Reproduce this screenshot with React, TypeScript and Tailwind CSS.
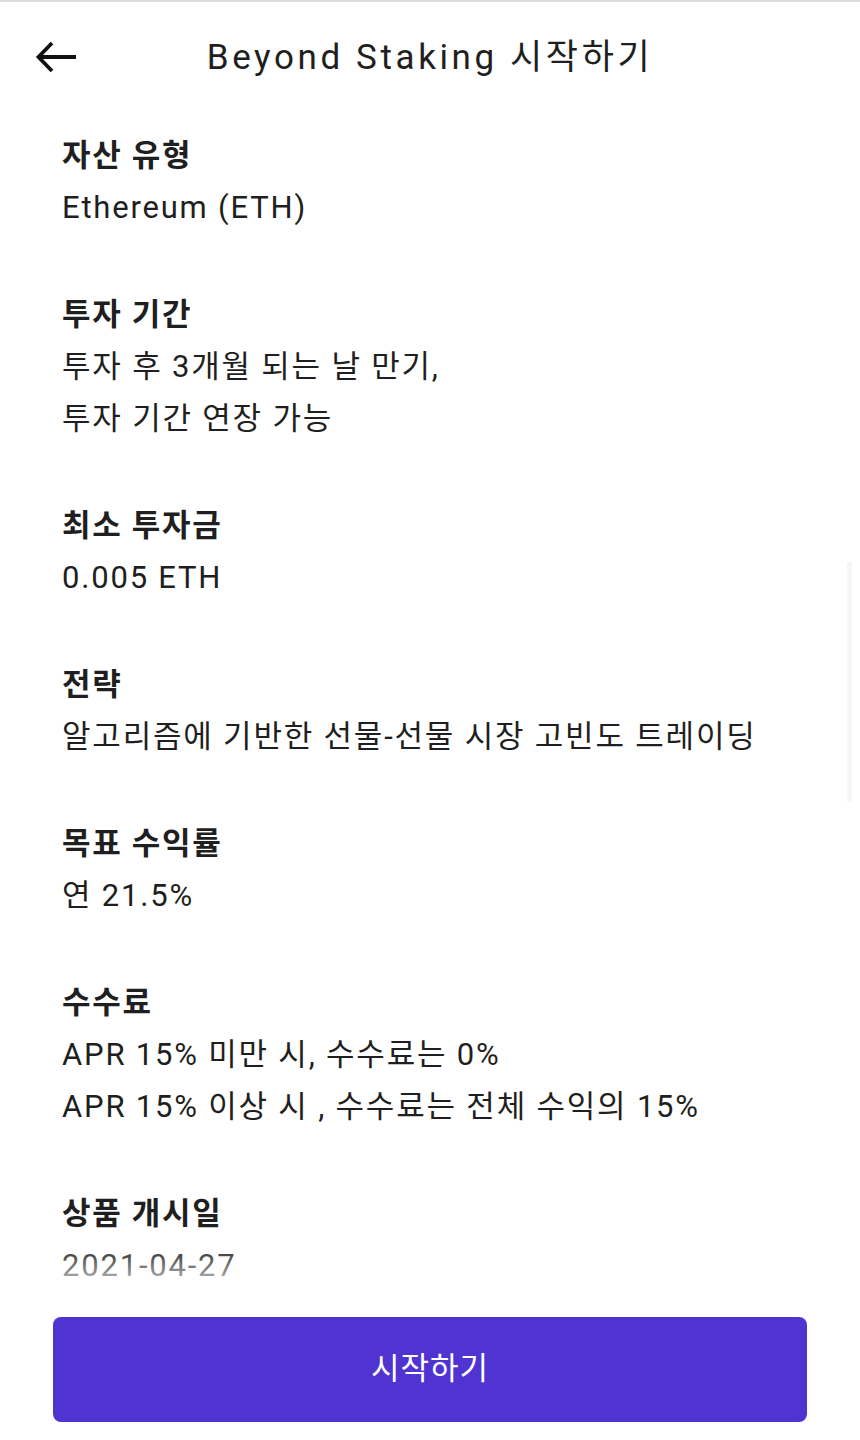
const rows: { label: string; lines: string[] }[] = [
  { label: "자산 유형", lines: ["Ethereum (ETH)"] },
  { label: "투자 기간", lines: ["투자 후 3개월 되는 날 만기,", "투자 기간 연장 가능"] },
  { label: "최소 투자금", lines: ["0.005 ETH"] },
  { label: "전략", lines: ["알고리즘에 기반한 선물-선물 시장 고빈도 트레이딩"] },
  { label: "목표 수익률", lines: ["연 21.5%"] },
  { label: "수수료", lines: ["APR 15% 미만 시, 수수료는 0%", "APR 15% 이상 시 , 수수료는 전체 수익의 15%"] },
  { label: "상품 개시일", lines: ["2021-04-27"] },
]

function BackArrow() {
  return (
    <svg width="44" height="34" viewBox="0 0 44 34" fill="none">
      <path d="M4 17H41" stroke="#111" strokeWidth="3.8" />
      <path d="M17 3L3.5 17L17 31" stroke="#111" strokeWidth="3.8" strokeLinejoin="miter" />
    </svg>
  )
}

export default function App() {
  return (
    <div
      className="relative flex h-[1440px] w-[860px] flex-col overflow-hidden border-t-2 border-[#dcdcdc] bg-white text-[#1f1f21]"
      style={{ fontFamily: "Roboto, 'Noto Sans CJK KR', sans-serif" }}
    >
      <header className="relative flex h-[112px] items-center justify-center">
        <button className="absolute left-[35px] top-[38px]">
          <BackArrow />
        </button>
        <h1 className="text-[35px] font-normal tracking-[3.6px]">Beyond Staking 시작하기</h1>
      </header>

      <main className="relative flex-1 overflow-hidden px-[62px] pt-[16px]">
        <div className="flex flex-col gap-[55px]">
          {rows.map(row => (
            <section key={row.label} className="flex flex-col">
              <h2 className="text-[31px] font-bold leading-[52px] tracking-[1.7px]">{row.label}</h2>
              {row.lines.map(line => (
                <p key={line} className="text-[31px] leading-[52px] tracking-[1.8px]">{line}</p>
              ))}
            </section>
          ))}
        </div>
        <div className="pointer-events-none absolute inset-x-0 bottom-0 h-[64px] bg-gradient-to-b from-white/0 via-white/60 to-white" />
        <div className="absolute right-[8px] top-[448px] h-[240px] w-[5px] rounded-full bg-[#f6f6f6]" />
      </main>

      <div className="px-[53px] pb-[18px] pt-[8px]">
        <button className="flex h-[105px] w-full items-center justify-center rounded-[8px] bg-[#5034d2] text-[31px] tracking-[1px] text-white">
          시작하기
        </button>
      </div>
    </div>
  )
}
